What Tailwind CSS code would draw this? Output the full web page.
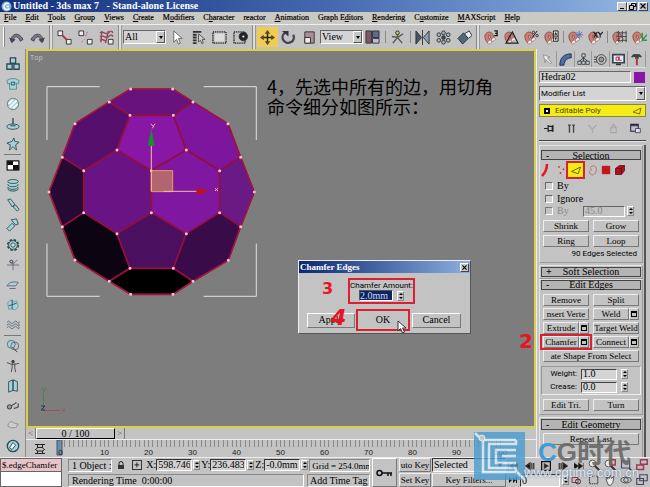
<!DOCTYPE html>
<html lang="en">
<head>
<meta charset="utf-8">
<title>Untitled - 3ds max 7 - Stand-alone License</title>
<script src="https://cdn.jsdelivr.net/npm/@tailwindcss/browser@4"></script>
</head>
<body class="h-screen overflow-hidden bg-[#c3c3c3] font-['Liberation_Serif',serif] text-[10px] leading-3 text-black">
<div class="relative flex h-full flex-col">

  <header class="flex h-3 shrink-0 items-center bg-linear-to-r from-[#14307c] via-[#4468b0] to-[#94b8e4] pl-px pr-[2px] text-[10px] font-bold text-white">
    <svg class="mr-px size-[11px]" viewBox="0 0 11 11"><circle cx="5.500" cy="5.500" r="5" fill="#7fb4d8"/><path d="M8 3C5 1 2.500 4 3 6.500S7 9 8.500 7.500M8 5.500H5.500" stroke="#fff" stroke-width="1.500" fill="none"/></svg>
    <h1 class="whitespace-pre">Untitled - 3ds max 7   - Stand-alone License</h1>
    <div class="ml-auto flex">
      <button aria-label="Minimize" class="flex h-[9px] w-[10px] items-end justify-center border border-t-white border-l-white border-r-[#444] border-b-[#444] bg-[#c8c8c8] pb-px"><span class="h-px w-1 bg-black"></span></button>
      <button aria-label="Restore" class="flex h-[9px] w-[10px] items-center justify-center border border-t-white border-l-white border-r-[#444] border-b-[#444] bg-[#c8c8c8]"><svg class="size-[7px]" viewBox="0 0 7 7" fill="none" stroke="#000"><path d="M2.500 2.500V.5h4v3h-2M.5 2.500h4v4h-4z"/></svg></button>
      <button aria-label="Close" class="ml-px flex h-[9px] w-[10px] items-center justify-center border border-t-white border-l-white border-r-[#444] border-b-[#444] bg-[#c8c8c8]"><svg class="size-[6px]" viewBox="0 0 6 6" stroke="#000" stroke-width="1.200"><path d="M.5.5l5 5M5.500.5l-5 5"/></svg></button>
    </div>
  </header>

  <nav class="flex h-3 shrink-0 items-center gap-[9px] bg-[#cbc9c3] pl-1 text-[8px] whitespace-nowrap [-webkit-text-stroke:0.2px_#000]">
    <button><u>F</u>ile</button><button><u>E</u>dit</button><button><u>T</u>ools</button><button><u>G</u>roup</button><button><u>V</u>iews</button><button><u>C</u>reate</button><button>M<u>o</u>difiers</button><button>C<u>h</u>aracter</button><button>reactor</button><button><u>A</u>nimation</button><button>Graph E<u>d</u>itors</button><button><u>R</u>endering</button><button>C<u>u</u>stomize</button><button><u>M</u>AXScript</button><button><u>H</u>elp</button>
  </nav>

  <div id="toolbar" role="toolbar" aria-label="Main toolbar" class="flex h-[25px] shrink-0 items-center overflow-hidden border-t border-[#eee] bg-[#c3c3c3]"></div>

  <main class="flex min-h-0 flex-1">
    <aside id="side" role="toolbar" aria-label="Reactor tools" class="flex w-[26px] shrink-0 flex-col overflow-hidden border-r border-[#8a8a8a] bg-[#c6c6c6] pt-[5px]"></aside>

    <div class="flex min-w-0 flex-1 flex-col">
      <section class="relative min-h-0 flex-1 overflow-hidden border-2 border-[#d8d04c] bg-[#7d7d7d]">
        <span class="absolute top-[1px] left-[2px] font-['Liberation_Mono',monospace] text-[7px] text-[#c4c4c4]">Top</span>
        <svg class="absolute top-0 left-0 h-[375px] w-[506px]" viewBox="28 51 506 375">
          <g transform="translate(35 75) scale(.3333)">
            <path d="M36 195V35h158M506 35h158v160M36 506v158h158M506 664h158V506" fill="none" stroke="#e2e2e2" stroke-width="3"/>
            <g stroke="#92103c" stroke-width="5" stroke-linejoin="round">
              <path fill="#68127e" d="M223 81L287 42H413L474 81L415 121H285z"/>
              <path fill="#560f6c" d="M223 81L285 121L246 225L146 287L82 247L120 146z"/>
              <path fill="#8817a6" d="M285 121H415L454 225L349 287L246 225z"/>
              <path fill="#7d169c" d="M474 81L579 146L617 247L554 287L454 225L415 121z"/>
              <path fill="#6a1384" d="M246 225L349 287V413L246 476L146 413V287z"/>
              <path fill="#8017a0" d="M454 225L554 287V413L454 476L349 413V287z"/>
              <path fill="#260a33" d="M146 287V413L82 455L42 351L82 247z"/>
              <path fill="#6a1a85" d="M554 287L617 247L658 351L617 455L554 413z"/>
              <path fill="#0d0412" d="M146 413L246 476L285 580L223 619L120 555L82 455z"/>
              <path fill="#4b0f5f" d="M349 413L454 476L415 580H285L246 476z"/>
              <path fill="#390b49" d="M554 413L617 455L580 556L474 619L415 580L454 476z"/>
              <path fill="#000" d="M285 580H415L474 619L414 658H287L223 619z"/>
            </g>
            <path d="M287 42H413L474 81L579 146L617 247L658 351L617 455L580 556L474 619L414 658H287L223 619L120 555L82 455L42 351L82 247L120 146L223 81z" fill="none" stroke="#a8183c" stroke-width="3"/>
            <path d="M287 42h0M413 42h0M474 81h0M579 146h0M617 247h0M658 351h0M617 455h0M580 556h0M474 619h0M414 658h0M287 658h0M223 619h0M120 555h0M82 455h0M42 351h0M82 247h0M120 146h0M223 81h0M285 121h0M415 121h0M246 225h0M454 225h0M349 287h0M146 287h0M554 287h0M146 413h0M349 413h0M554 413h0M246 476h0M454 476h0M285 580h0M415 580h0" stroke="#f4c4dc" stroke-width="9" stroke-linecap="round"/>
            <path d="M349 287h64v63h-64z" fill="#c08060" fill-opacity=".75" stroke="#e8a050" stroke-width="3"/>
            <path d="M349 349V212M386 349h100" stroke="#f0c0a0" stroke-width="3"/>
            <path d="M349 160l10 52h-20z" fill="#14902c"/><path d="M524 349l-40 -11v22z" fill="#c01020"/>
            <path d="M348 146l6 8M360 146l-8 14M540 340l9 8M549 340l-9 8" stroke="#f0b090" stroke-width="3"/>
          </g>
          <path d="M43.500 409V394" stroke="#3f8a4a"/><path d="M43 410.500H60" stroke="#b04858"/>
          <path d="M42 388l2 3M46 388l-3 5" stroke="#3f8a4a"/><path d="M62 409l3 3M65 409l-3 3" stroke="#b04858"/><path d="M41 406h4l-4 4h4" stroke="#303060" fill="none"/>
        </svg>
        <p class="absolute top-[25px] left-[239px] font-['Noto_Sans_CJK_SC',sans-serif] text-[18px] leading-5 whitespace-nowrap text-black">4，先选中所有的边，用切角<br>命令细分如图所示：</p>

        <div role="dialog" aria-label="Chamfer Edges" class="absolute top-[209px] left-[270px] w-[173px] border border-t-[#eee] border-l-[#eee] border-r-[#555] border-b-[#555] bg-[#c3c3c3] pb-[2px]">
          <div class="flex h-3 items-center bg-linear-to-r from-[#0e2870] to-[#8fb0e0] pr-px pl-px text-[9px] font-bold text-white">Chamfer Edges
            <button aria-label="Close dialog" class="ml-auto flex size-[9px] items-center justify-center border border-t-white border-l-white border-r-[#444] border-b-[#444] bg-[#c8c8c8]"><svg class="size-[5px]" viewBox="0 0 6 6" stroke="#000" stroke-width="1.300"><path d="M.5.5l5 5M5.500.5l-5 5"/></svg></button>
          </div>
          <div class="mt-[5px] ml-[49px] flex h-[26px] w-[67px] flex-col items-center border-2 border-[#dc2030] pt-px">
            <label for="amt" class="font-['Roboto',sans-serif] text-[8px] leading-[9px] whitespace-nowrap">Chamfer Amount:</label>
            <div class="flex items-center gap-1"><input id="amt" value="2.0mm" class="h-[11px] w-[34px] border border-[#555] border-r-white border-b-white bg-[#0d2464] text-[10px] text-[#d0d8f0]"><span class="spin"></span></div>
          </div>
          <div class="mt-[5px] flex h-[22px] items-center pl-2">
            <button class="h-[15px] w-[48px] border border-t-white border-l-white border-r-[#777] border-b-[#777]">Apply</button>
            <button class="ml-px h-[22px] w-[54px] border-2 border-[#dc2030]">OK</button>
            <button class="ml-[2px] h-[15px] w-[49px] border border-t-white border-l-white border-r-[#777] border-b-[#777]">Cancel</button>
          </div>
          <span class="absolute top-[18px] left-[23px] font-['DejaVu_Sans',sans-serif] text-[16px] leading-5 font-bold text-[#e81420]">3</span>
          <span class="absolute top-[45px] left-[32px] font-['DejaVu_Sans',sans-serif] text-[22px] leading-6 font-bold text-[#e81420] italic">4</span>
          <svg class="absolute top-[59px] left-[98px] h-[14px] w-[10px]" viewBox="0 0 10 14"><path d="M1 1v10l2.500-2.500L5.500 13l2-1-2-4H9z" fill="#fff" stroke="#333"/></svg>
        </div>
        <span class="absolute right-[1px] bottom-[75px] font-['DejaVu_Sans',sans-serif] text-[20px] leading-5 font-bold text-[#e81420]">2</span>
      </section>

      <div class="flex h-3 shrink-0 items-center border-b border-[#eee] bg-[#c3c3c3] text-[10px]">
        <button aria-label="Previous frame" class="h-[11px] w-[10px] border-r border-[#777] text-[9px] leading-[9px] text-[#555]">&lt;</button>
        <button class="h-[11px] w-[79px] border border-t-white border-l-white border-r-black border-b-black leading-[9px]">0 / 100</button>
        <button aria-label="Next frame" class="h-[11px] w-[10px] border-r border-[#777] text-[9px] leading-[9px] text-[#555]">&gt;</button>
      </div>
      <div class="flex h-[17px] shrink-0 items-center bg-[#c3c3c3]">
        <button aria-label="Open mini curve editor" class="flex w-[28px] shrink-0 justify-end"><svg class="mr-2 size-[12px]" viewBox="0 0 12 12" fill="none" stroke="#222"><path d="M1 1.500h10M1 10.500h10M3.500 2v3L1.500 6.500 3.500 8v2.500M8.500 2v3l2 1.500L8.500 8v2.500M3 4.500h6M3 8h6"/></svg></button>
        <svg id="ticks" class="h-[17px] w-[480px] shrink-0" viewBox="54 440 480 17" font-family="Liberation Sans, sans-serif" font-size="8"></svg>
      </div>
    </div>

    <aside class="flex w-[114px] shrink-0 flex-col overflow-hidden border-l border-[#eee] bg-[#c3c3c3] pt-[2px] pr-[4px] pl-[2px]">
      <div id="tabs" class="flex h-[17px] shrink-0 items-center border-b border-[#ddd]"></div>
      <div class="mt-[3px] flex shrink-0 items-center justify-between pr-px">
        <input aria-label="Object name" value="Hedra02" class="h-3 w-[92px] border border-[#666] border-r-white border-b-white bg-[#cfcfcf] px-px">
        <button aria-label="Object colour" class="size-[11px] bg-[#8a14a8]"></button>
      </div>
      <div class="relative mt-[3px] shrink-0">
        <select aria-label="Modifier List" class="block h-[15px] w-full appearance-none border border-[#666] border-r-white border-b-white bg-[#d4d4d4] px-px font-['Roboto',sans-serif] text-[8px]"><option>Modifier List</option></select>
        <span class="pointer-events-none absolute top-px right-px flex h-[13px] w-[9px] items-center justify-center border border-t-white border-l-white border-r-[#555] border-b-[#555] bg-[#c6c6c6]"><span class="border-x-2 border-t-3 border-x-transparent border-t-black"></span></span>
      </div>
      <div class="mt-[3px] flex h-[13px] shrink-0 items-center border border-[#8a8640] bg-[#f4ec14] pr-[3px] pl-1 font-['Roboto',sans-serif] text-[8px] text-[#4a4410]">
        <span class="mr-[5px] flex size-[6px] items-center justify-center bg-black"><span class="size-[2px] bg-white"></span></span>Editable Poly
        <svg class="ml-auto h-[8px] w-[10px]" viewBox="0 0 10 8" fill="none" stroke="#7a7210"><path d="M1 5L9 1 7.500 7z"/></svg>
      </div>
      <div id="stack" class="mt-[2px] flex h-[18px] shrink-0 items-center"></div>
      <div class="mt-[3px] h-[2px] shrink-0 border-t border-[#444] bg-[#e0e0e0]"></div>

      <div class="mt-[3px] min-h-0 flex-1 overflow-hidden border-r-2 border-[#555] pr-px">
        <section class="border border-[#999] border-t-[#e4e4e4] border-l-[#e4e4e4] px-px pt-[4px] pb-[2px]">
          <h2 class="relative h-[10px] border border-[#444] bg-[#b4b4b4] text-center leading-[9px]"><span class="absolute left-1">-</span>Selection</h2>
          <div id="subobj" class="relative flex h-[20px] items-center pl-[14px]"></div>
          <div class="flex flex-col px-1">
            <label class="flex h-3 items-center gap-1"><input type="checkbox" class="size-[8px] appearance-none border border-[#666] border-r-white border-b-white bg-[#d0d0d0]">By</label>
            <label class="flex h-[13px] items-center gap-1"><input type="checkbox" class="size-[8px] appearance-none border border-[#666] border-r-white border-b-white bg-[#d0d0d0]">Ignore</label>
            <div class="flex h-3 items-center text-[#888]"><label class="flex items-center gap-1"><input type="checkbox" disabled class="size-[8px] appearance-none border border-[#777] border-r-white border-b-white">By</label><input aria-label="Angle" disabled value="45.0" class="ml-auto h-[11px] w-[42px] border border-[#666] border-r-white border-b-white px-px"><span class="spin mr-[3px] ml-[2px]"></span></div>
          </div>
          <div class="mt-[3px] grid grid-cols-2 gap-x-1 gap-y-[3px] px-[2px]">
            <button class="btn">Shrink</button><button class="btn">Grow</button><button class="btn">Ring</button><button class="btn">Loop</button>
          </div>
          <p class="mt-px pr-1 text-right font-['Roboto',sans-serif] text-[8px]">90 Edges Selected</p>
        </section>
        <section class="mt-[2px] border border-[#999] border-t-[#e4e4e4] border-l-[#e4e4e4] p-px">
          <h2 class="relative h-[10px] border border-[#444] bg-[#b4b4b4] text-center leading-[8px]"><span class="absolute left-1 font-bold">+</span>Soft Selection</h2>
        </section>
        <section class="border border-[#999] border-t-[#e4e4e4] border-l-[#e4e4e4] px-px pb-[3px]">
          <h2 class="relative h-[10px] border border-[#444] bg-[#b4b4b4] text-center leading-[8px]"><span class="absolute left-1">-</span>Edit Edges</h2>
          <div class="mt-[4px] grid grid-cols-2 gap-x-1 gap-y-[2px] px-[2px]">
            <button class="btn">Remove</button><button class="btn">Split</button>
            <button class="btn">nsert Verte</button><div class="flex"><button class="btn flex-1">Weld</button><button class="opt" aria-label="Weld settings"></button></div>
            <div class="flex"><button class="btn flex-1">Extrude</button><button class="opt" aria-label="Extrude settings"></button></div><button class="btn">Target Weld</button>
            <div class="relative flex"><button class="btn flex-1">Chamfer</button><button class="opt" aria-label="Chamfer settings"></button><span class="pointer-events-none absolute -inset-x-[3px] -inset-y-[2px] border-2 border-[#dc2030]"></span></div><div class="flex"><button class="btn flex-1">Connect</button><button class="opt" aria-label="Connect settings"></button></div>
            <button class="btn col-span-2">ate Shape From Select</button>
          </div>
          <div class="mt-[4px] flex flex-col gap-px border border-[#999] border-r-[#eee] border-b-[#eee] py-px pr-3 font-['Roboto',sans-serif] text-[8px]">
            <div class="flex h-3 items-center justify-end gap-1"><label for="wt">Weight:</label><input id="wt" value="1.0" class="h-[11px] w-[36px] border border-[#444] border-r-white border-b-white bg-[#d4d4d4] px-px font-['Liberation_Serif',serif] text-[10px]"><span class="spin"></span></div>
            <div class="flex h-3 items-center justify-end gap-1"><label for="cr">Crease:</label><input id="cr" value="0.0" class="h-[11px] w-[36px] border border-[#444] border-r-white border-b-white bg-[#d4d4d4] px-px font-['Liberation_Serif',serif] text-[10px]"><span class="spin"></span></div>
          </div>
          <div class="mt-[4px] grid grid-cols-2 gap-1 px-[2px]"><button class="btn">Edit Tri.</button><button class="btn">Turn</button></div>
        </section>
        <section class="mt-[2px] h-16 border border-[#999] border-t-[#e4e4e4] border-l-[#e4e4e4] px-px pt-px">
          <h2 class="relative h-[11px] border border-[#444] bg-[#b4b4b4] text-center leading-[9px]"><span class="absolute left-1">-</span>Edit Geometry</h2>
          <div class="mt-[3px] grid px-[2px]"><button class="btn">Repeat Last</button></div>
        </section>
      </div>
    </aside>
  </main>

  <footer class="flex h-[30px] shrink-0 gap-[2px] border-t border-[#eee] bg-[#c3c3c3] whitespace-nowrap">
    <div class="flex w-[62px] shrink-0 flex-col">
      <input aria-label="Macro recorder" value="$.edgeChamfer" class="h-[14px] w-full border border-[#666] bg-[#e8c4c8] px-px text-[9px]">
      <input aria-label="Script listener" class="h-[15px] w-full border border-t-0 border-[#666] bg-white">
    </div>
    <div class="ml-1 flex w-[302px] shrink-0 flex-col gap-px">
      <div class="flex h-[14px] items-center">
        <span class="h-[13px] w-[46px] overflow-hidden border border-[#888] border-r-white border-b-white pl-[3px]">1 Object :</span>
        <button aria-label="Lock selection" class="ml-[5px]"><svg class="size-[8px]" viewBox="0 0 8 8"><path d="M2 4V2.500a2 2 0 014 0V4" fill="none" stroke="#222"/><path d="M1 4h6v4H1z" fill="#333"/></svg></button>
        <button aria-label="Absolute mode" class="mr-[4px] ml-[7px] size-[10px] border border-[#333]"><svg viewBox="0 0 8 8" stroke="#222"><path d="M4 1.500v5M1.500 4h5"/></svg></button>
        <label for="cx">X:</label><input id="cx" value="598.746mm" class="h-3 w-[36px] border border-[#333] border-r-white border-b-white bg-[#d0d0d0] px-px text-[10px]"><span class="spin mr-px ml-px"></span>
        <label for="cy">Y:</label><input id="cy" value="236.483mm" class="h-3 w-[36px] border border-[#333] border-r-white border-b-white bg-[#d0d0d0] px-px text-[10px]"><span class="spin mr-px ml-px"></span>
        <label for="cz">Z:</label><input id="cz" value="-0.0mm" class="h-3 w-[36px] border border-[#333] border-r-white border-b-white bg-[#d0d0d0] px-px text-[10px]"><span class="spin mr-px ml-px"></span>
        <span class="ml-auto h-[13px] w-[63px] overflow-hidden border border-[#888] border-r-white border-b-white pl-[2px] text-[9px]">Grid = 254.0mm</span>
      </div>
      <div class="flex h-[14px] items-center justify-between">
        <span class="h-[13px] w-[236px] border border-[#888] border-r-white border-b-white pl-[3px]">Rendering Time&nbsp; 0:00:00</span>
        <span class="h-[13px] w-[63px] border border-[#888] border-r-white border-b-white pl-[2px]">Add Time Tag</span>
      </div>
    </div>
    <button aria-label="Set keys" class="flex w-[25px] shrink-0 items-center justify-center border border-t-white border-l-white border-r-[#777] border-b-[#777]"><svg class="h-[8px] w-[17px]" viewBox="0 0 17 8" fill="none" stroke="#111" stroke-width="1.500"><circle cx="3.500" cy="4" r="2.500"/><path d="M6 4h10M12 4v3M15 4v3"/></svg></button>
    <div class="grid w-[107px] shrink-0 grid-cols-[32px_74px] grid-rows-2 gap-px">
      <button class="btn2">uto Key</button>
      <div class="relative"><select aria-label="Key mode" class="h-[14px] w-full appearance-none border border-[#333] border-r-white border-b-white bg-[#d4d4d4] px-px text-[10px]"><option>Selected</option></select><span class="pointer-events-none absolute top-[5px] right-[3px] border-x-3 border-t-4 border-x-transparent border-t-black"></span></div>
      <button class="btn2">Set Key</button><button class="btn2">Key Filters...</button>
    </div>
    <div class="flex w-[76px] shrink-0 flex-col">
      <div id="play" class="flex h-[15px] items-center justify-between"></div>
      <div class="flex h-[14px] items-center gap-[2px]"><button aria-label="Key mode toggle"><svg class="size-[10px]" viewBox="0 0 10 10" fill="#111"><path d="M1 2v6l3-3zM5 2v6l3-3zM8 2h1v6H8z"/></svg></button><input aria-label="Current frame" value="0" class="h-[13px] w-[40px] border border-[#333] border-r-white border-b-white bg-[#d8d8d8] px-px text-[10px]"><span class="spin"></span><button aria-label="Time configuration"><svg class="size-[10px]" viewBox="0 0 10 10" fill="none"><path d="M1 2.500h6v5H1z" stroke="#a03040"/><circle cx="7" cy="6.500" r="2.500" stroke="#333"/></svg></button></div>
    </div>
    <div id="nav" class="grid flex-1 grid-cols-4 place-items-center"></div>
  </footer>

  <div class="pointer-events-none absolute right-[8px] bottom-[3px] h-[53px] w-[168px]">
    <svg class="absolute top-[1px] left-0 h-[49px] w-[51px] opacity-80" viewBox="0 0 51 49">
      <path d="M0 0h51v48H0z" fill="#58a8d8"/>
      <path d="M0 0h51v48H0z" fill="#2f86c4" fill-opacity=".35"/>
      <path d="M1 1l8 8M42 8H9v32h33M42 8v4H15v24h27v4M42 18H22v13h20M51 48l-8-8M28 24h14" stroke="#dcecf6" stroke-width="2.500" fill="none"/>
      <circle cx="8" cy="6" r="3" fill="#b8ccd0" stroke="#eee"/>
    </svg>
    <div class="absolute top-[7px] left-[64px] flex font-['Liberation_Sans','Noto_Sans_CJK_SC',sans-serif] text-[26px] leading-7 font-bold whitespace-nowrap text-[#666]/90"><span class="text-[#3c9bd8]">C</span>G<span class="font-['Noto_Sans_CJK_SC',sans-serif] text-[27px]">时代</span></div>
    <div class="absolute top-[36px] left-[50px] font-['Liberation_Sans',sans-serif] text-[13px] leading-3 whitespace-nowrap text-[#eef2f6]/90 [text-shadow:0_0_2px_#4a6a8a]">www.cgtime.com.cn</div>
  </div>
</div>

<script>
const svg = (body, cls = 'block h-4 w-4') => `<svg class="${cls}" viewBox="0 0 16 16" fill="none" stroke="#333">${body}</svg>`;
const magnet = '<path d="M1 8C0 3 6 0 9 4l3 6-3 2-3-6C5 5 4 6 5 8l3 5-3 2C3 13 1 10 1 8z" fill="#d07c70" stroke="#6a3a38" stroke-width=".7"/><path d="M9 12l3-2-1-2-3 2zM5 15l3-2-1-2-3 2z" fill="#eee" stroke="none"/>';
const box = (x, y) => `<path d="M${x} ${y}h5v5h-5z" fill="#eee"/>`;
const tools = [
  ['grip'],
  ['Undo', '<path d="M2 12C2 4 10 1 15 10l-3 2C10 6 6 6 5 10z" fill="#778" stroke="#445"/><path d="M0 8l3 6 4-4z" fill="#445" stroke="none"/>'],
  ['Redo', '<path d="M14 12C14 4 6 1 1 10l3 2C6 6 10 6 11 10z" fill="#778" stroke="#445"/><path d="M16 8l-3 6-4-4z" fill="#445" stroke="none"/>'],
  ['dsep'],
  ['Link', box(1, 1) + box(10, 10) + '<path d="M6 6l5 5" stroke="#a33" stroke-width="2"/>'],
  ['Unlink', box(1, 1) + box(10, 10) + '<path d="M10 2l-2 5M4 13l3-3" stroke="#b66" stroke-dasharray="2 1"/>'],
  ['Bind', '<path d="M1 3c4-3 5 3 9 0s4-1 5 0M1 7c4-3 5 3 9 0s4-1 5 0M1 11c4-3 4 2 7 0M3 1l-1 12M10 1L7 14" stroke="#944a58" stroke-width="1.500"/>' + box(10, 10)],
  ['dsep'],
  ['select', 'All', 'Selection filter'],
  ['Select', '<path d="M4 1v12l3-3 2 5 2-1-2-5h4z" fill="#fff" stroke="#666"/>'],
  ['Select by name', '<path d="M2 2h9M2 5h4M2 8h4M2 11h4M2 14h4" stroke-width="2"/><path d="M8 4v9l2-2 2 4 1-1-1-4h3z" fill="#ccc" stroke="#555"/>'],
  ['Selection region', '<path d="M1 2h14v12H1z" stroke-width="2" stroke-dasharray="1 1"/><path d="M3 4h10v8H3z" fill="#ddd" stroke="none"/>'],
  ['Window crossing', '<path d="M1 2h12v12H1z" stroke-width="2" stroke-dasharray="1 1"/><circle cx="11" cy="7" r="4.500" fill="#222"/><circle cx="11" cy="7" r="1.500" fill="#eee"/>'],
  ['dsep'],
  ['Move', '<path d="M8 2v12M2 8h12" stroke="#222" stroke-width="1.500"/><path d="M8 0l3 4H5zM8 16l3-4H5zM0 8l4-3v6zM16 8l-4-3v6z" fill="#554a20" stroke="none"/>', 1],
  ['Rotate', '<path d="M4 3A6 6 0 1013 5" stroke="#445" stroke-width="2.500"/><path d="M1 1h7v6z" fill="#334" stroke="none"/>'],
  ['Scale', '<path d="M3 2h10v12H3z" fill="#a89098"/><path d="M3 8h6v6H3z" fill="#f4e8ec"/>'],
  ['select', 'View', 'Reference coordinate system'],
  ['Pivot', '<path d="M1 1h6v13H1z" fill="#7a5868"/><path d="M8 1h7v7H8z" fill="#5c6a90"/><path d="M8 9h7v5H8z" fill="#b8c0d0"/>'],
  ['sep'],
  ['Manipulate', '<path d="M8 1v8M3 14l5-6 5 6M2 7l6 1 6-4" stroke="#565a50" stroke-width="1.500"/><circle cx="8" cy="3" r="2" fill="#c8c060"/>'],
  ['sep'],
  ['Mirror', '<path d="M1 1l6 7-6 7z" fill="#456"/><path d="M15 1L9 8l6 7z" fill="#8aa0b8"/><path d="M8 0v16"/>'],
  ['Array', '<g fill="#9fb4c4"><circle cx="8" cy="3" r="2"/><circle cx="3" cy="5" r="2"/><circle cx="13" cy="5" r="2"/><circle cx="3" cy="11" r="2"/><circle cx="13" cy="11" r="2"/><circle cx="8" cy="13" r="2"/><circle cx="8" cy="8" r="2" fill="#445"/></g>'],
  ['Align', '<path d="M1 9l6-6 5 6-6 6z" fill="#4a6c7a"/><path d="M8 4l5-3 3 5-4 3z" fill="#e4ecf0"/>'],
  ['dsep'],
  ['Snap', magnet + '<path d="M11 1h3v5h-3M12 3.500h2" stroke="#111" stroke-width="1.300"/>', 2],
  ['Angle snap', magnet + '<path d="M2 14h13L9 2z" stroke="#222" stroke-width="1.200"/>', 2],
  ['Percent snap', magnet + '<path d="M14 1L9 8" stroke="#111"/><circle cx="10" cy="2.500" r="1.300"/><circle cx="14" cy="6" r="1.300"/>', 2],
  ['Spinner snap', magnet + '<path d="M10 1h5v11h-5zM10 6.500h5" stroke="#222" fill="#ddd"/><path d="M11 5l1.500-3L14 5zM11 8l1.500 3L14 8z" fill="#222" stroke="none"/>', 2],
  ['sep'],
  ['Snap vertex', magnet + '<path d="M12 1v8M8 5h8M9 2l6 6M15 2L9 8" stroke="#5a70c0"/>', 2],
  ['Snap axis', magnet + '<path d="M6 2l4 6M10 2L6 8M11 2l2 3 3-3M13 5v3" stroke="#222" stroke-width="1.300"/>', 2],
  ['sep'],
  ['Snap grid', magnet + '<path d="M7 1v12M11 1v12M15 1v12M5 3h11M5 7h11M5 11h11" stroke="#444"/>', 2],
  ['Snap pivot', magnet + '<path d="M11 12V3M11 11h5M11 11l5-6" stroke="#2c9a48" stroke-width="1.600"/>', 2],
];
document.getElementById('toolbar').innerHTML = tools.map(([n, b, k]) => {
  if (n === 'grip') return '<i class="flex h-5 w-[6px] shrink-0 justify-end pr-px"><i class="w-[2px] border-x border-l-white border-r-[#888]"></i></i>';
  if (n === 'dsep') return '<i class="flex h-full w-[6px] shrink-0 justify-between px-px"><i class="w-[2px] border-x border-l-[#888] border-r-[#ddd]"></i><i class="w-[2px] border-x border-l-[#ddd] border-r-[#999]"></i></i>';
  if (n === 'sep') return '<i class="flex h-3 w-1 shrink-0 justify-center"><i class="w-px bg-[#888]"></i></i>';
  if (n === 'select') return `<div class="relative w-[43px] shrink-0 ${b === 'All' ? 'mr-px' : '-mr-px'}"><select aria-label="${k}" class="block h-[14px] w-full appearance-none border border-[#666] border-r-white border-b-white bg-[#d4d4d4] px-px text-[10px] leading-3"><option>${b}</option></select><span class="pointer-events-none absolute top-px right-px flex h-3 w-[9px] items-center justify-center border border-t-white border-l-white border-r-[#555] border-b-[#555] bg-[#c6c6c6]"><span class="border-x-2 border-t-3 border-x-transparent border-t-black"></span></span></div>`;
  const cls = k === 1 ? 'flex h-5 w-[21px] shrink-0 items-center justify-center bg-[#f0cc50]' : k === 2 ? 'flex h-5 w-5 shrink-0 items-center justify-center' : 'flex h-5 w-[21px] shrink-0 items-center justify-center';
  return `<button aria-label="${n}" class="${cls}">${svg(b, 'block h-[15px] w-[15px]')}</button>`;
}).join('');

const T = '#a4d4d8', D = '#2c4a50';
const side = [
  ['Rigid bodies', `<path d="M5 1h6v6H5zM1 8h6v6H1zM9 8h6v6H9z" fill="${T}" stroke="${D}" stroke-width="1.500"/>`],
  ['Cloth', `<path d="M1 4l4-2h6l4 2-1 4-2-1v7H4V7L2 8z" fill="${T}" stroke="#5a8a90"/><path d="M6 6h4v3H6z" stroke="${D}"/>`],
  ['Soft body', `<circle cx="8" cy="8" r="6.500" fill="${T}" stroke="#777"/><path d="M4 12L12 4M3 8l5-5M8 13l5-5" stroke="#fff" stroke-width="2"/>`],
  ['Rope', `<path d="M8 1v9" stroke="${D}" stroke-width="1.500"/><ellipse cx="8" cy="11" rx="7" ry="3" fill="${T}" stroke="${D}"/><path d="M5 10h6"/>`],
  ['Deforming mesh', `<path d="M9 1l1 4 5 1-4 3 1 6-4-4-4 4 1-6-4-2 6-2z" fill="${T}" stroke="${D}"/>`],
  null,
  ['Plane', '<path d="M1 3h14v11H1z" fill="#111"/><path d="M8 4h6v4H8zM2 8h6v5H2z" fill="#fff" stroke="none"/>'],
  ['Spring', `<path d="M2 4c0-3 12-3 12 0s-12 3-12 0M2 7c0 4 12 4 12 0M2 10c0 4 12 4 12 0M2 12c0 4 12 4 12 0" fill="${T}" stroke="${D}"/>`],
  ['Linear dashpot', `<path d="M2 2l3-1 5 6-3 3zM8 10l3-2 4 5-2 2z" fill="${T}" stroke="${D}"/>`],
  ['Angular dashpot', `<path d="M6 2l6-1 2 6-3 1zM1 12l6-6 3 3-6 6z" fill="${T}" stroke="${D}"/>`],
  ['Motor', `<circle cx="8" cy="8" r="6" stroke="${D}" stroke-width="2" stroke-dasharray="3 1.700"/><circle cx="8" cy="8" r="5" fill="${T}" stroke="${D}"/><circle cx="8" cy="8" r="2.500" fill="#ddd" stroke="${D}"/>`],
  ['Wind', `<path d="M1 8h14M8 3v11M4 4l4 3 5-5" stroke="#667"/><circle cx="6" cy="4" r="1.500" fill="${T}"/>`],
  ['Toy car', `<path d="M1 9c3-5 8-5 13-4l-3 4zM4 12h7" fill="${T}" stroke="#567"/>`],
  ['Fracture', `<path d="M2 5l4-3 2 3 4-2 2 7-4 4-3-2-4 1z" fill="${T}" stroke="#6a9aa0"/><path d="M7 2v11M3 9l9-3" stroke="${D}"/>`],
  ['Water', '<path d="M1 5q2-3 4 0t4 0 4 0 2-1M1 8q2-3 4 0t4 0 4 0 2-1M1 11q2-3 4 0t4 0 4 0 2-1" stroke="#567"/>'],
  null,
  ['Constraint solver', `<circle cx="6" cy="6" r="4.500" fill="${T}" stroke="#567"/><circle cx="10" cy="8" r="4.500" stroke="#567"/><path d="M8 10l5 5"/>`],
  ['Rag doll', `<circle cx="8" cy="3" r="1.500" fill="#555"/><path d="M1 4l5 2h4l5-1M7 5v5l-1 5M10 5v5l1 5" stroke="#444"/>`],
  ['Hinge', `<path d="M3 3l5-2v12l-5 2zM8 1l5 2v11l-5-1z" fill="${T}" stroke="${D}"/>`],
  ['Wheel', '<circle cx="4" cy="9" r="2.500" fill="#999"/><path d="M6 8l6-4M9 11l5-2v-4" stroke="#555" stroke-width="1.500"/>'],
  ['Path', `<path d="M2 8c2-6 4-6 8-3l4 1-3 4H5z" fill="#ccc" stroke="#888"/>`],
  ['Preview', `<circle cx="8" cy="8" r="6.500" fill="${T}" stroke="${D}" stroke-width="1.500"/><path d="M4 10l4-6 3 3-4 5z" fill="#e8f4f4" stroke="${D}"/>`],
];
document.getElementById('side').innerHTML = side.map(s => s
  ? `<button aria-label="${s[0]}" class="flex h-5 shrink-0 items-center justify-center">${svg(s[1], 'block h-[14px] w-[14px]')}</button>`
  : '<hr class="mx-1 border-[#777]">').join('');

const fill = (id, list, btn, size) => document.getElementById(id).innerHTML = list.map(([n, b]) => `<button aria-label="${n}" class="${btn}">${svg(b, size)}</button>`).join('');
fill('tabs', [
  ['Create', '<path d="M3 2l8 3-3 1 5 6-2 1-5-5-1 4z" fill="#eee" stroke="#888"/>'],
  ['Modify', '<path d="M1 15C1 6 6 1 15 1v5c-5 0-8 3-9 9z" fill="#4a6ea8" stroke="#223"/>'],
  ['Hierarchy', '<path d="M6 1h4v4H6zM1 10h4v4H1zM6 10h4v4H6zM11 10h4v4h-4z" fill="#c8d4e0"/><path d="M8 5v5M3 10l5-4 5 4"/>'],
  ['Motion', '<circle cx="9" cy="8" r="6"/><circle cx="9" cy="8" r="3" fill="#99a"/><path d="M0 5h4M0 8h3M0 11h4"/>'],
  ['Display', '<path d="M1 2h14v10H1z" fill="#e8e8f0" stroke="#345" stroke-width="2"/><path d="M5 5h3v4H5zM9 4v5h3" stroke="#a24"/><path d="M5 14h6" stroke-width="2"/>'],
  ['Utilities', '<path d="M2 5l2-3h8l2 3-4-1v3H7V4z" fill="#444"/><path d="M8.500 6v9" stroke="#a44048" stroke-width="2.500"/>'],
], 'flex h-4 flex-1 items-center justify-center border-r border-[#999]', 'block size-[13px]');
fill('stack', [
  ['Pin stack', '<path d="M0 8h6M6 3v10M6 5h6v6H6M13 3v10" stroke="#222" stroke-width="1.700"/>'],
  ['Show end result', '<path d="M5 2v12M11 2v12M3 3h4M9 3h4" stroke="#444" stroke-width="2"/>'],
  ['Make unique', '<path d="M2 3l6 6 6-6M8 9v5" stroke="#aaa" stroke-width="2"/>'],
  ['Remove modifier', '<path d="M4 7h8v7H4zM5 6l3-4 3 4" stroke="#a4a4a4" stroke-width="1.500"/>'],
  ['Configure sets', '<path d="M1 2h11v10H1zM1 4h11" stroke="#224" stroke-width="1.500"/><path d="M8 8h7v6H8z" fill="#dde" stroke="#224"/>'],
], 'flex flex-1 items-center justify-center', 'block size-[11px]');
fill('subobj', [
  ['Vertex', '<path d="M3 4h2M9 7h2M5 12h2" stroke="#c22" stroke-width="2"/>'],
  ['Edge', '<path d="M2 10L14 4 11 13z" stroke="#6a6410" stroke-width="1.300"/>'],
  ['Border', '<path d="M8 3c5-3 7 4 5 8s-6 5-8 1 4-3 2-5-1-3 1-4z" stroke="#c66" stroke-width="1.300"/>'],
  ['Polygon', '<path d="M3 3h10v10H3z" fill="#d01018" stroke="#a01010"/>'],
  ['Element', '<path d="M2 6l5-4h7v7l-4 5H2z" fill="#b01020" stroke="#600810"/><path d="M2 6h8v8M10 6l4-4" stroke="#600810"/>'],
], 'flex h-[18px] w-[14px] items-center justify-center nth-2:-ml-[3px] nth-2:w-[19px] nth-2:border-2 nth-2:border-[#dc2030] nth-2:bg-[#f4ec14]', 'block size-[12px]');
document.getElementById('subobj').insertAdjacentHTML('beforeend', '<svg class="absolute top-[3px] left-0 h-[15px] w-[8px]" viewBox="0 0 8 15" fill="none" stroke="#e81420" stroke-width="2.500"><path d="M6 1C6 6 4 10 1 13"/></svg>');
fill('play', [
  ['Go to start', '<path d="M1 3v10M9 3v10L2 8zM16 3v10L9 8z" fill="#111"/>'],
  ['Previous', '<path d="M8 3v10L1 8zM11 3v10M14 3v10" fill="#111" stroke-width="2"/>'],
  ['Play', '<path d="M1 1h14v14H1z" stroke="#111" stroke-width="2"/><path d="M5 4v8l7-4z" fill="#223"/>'],
  ['Next', '<path d="M8 3v10l7-5zM2 3v10M5 3v10" fill="#111" stroke-width="2"/>'],
  ['Go to end', '<path d="M15 3v10M7 3v10l7-5zM0 3v10l7-5z" fill="#111"/>'],
], 'flex items-center justify-center', 'block size-[10px]');
const lens = '<circle cx="6" cy="6" r="4.500" fill="#e8eef4"/><path d="M9 9l6 6" stroke-width="2.500"/>';
fill('nav', [
  ['Zoom', lens], ['Zoom all', lens + '<path d="M8 1h7v7H8z" stroke="#b03848" stroke-width="2"/>'],
  ['Zoom extents', '<path d="M2 1v11h10M4 3h9v9" stroke="#447" stroke-width="1.500"/><path d="M12 12l3 3" stroke-width="2"/>'],
  ['Zoom extents all', '<path d="M6 1h9v6H6zM1 8h9v6H1z" stroke="#a03858" stroke-width="2"/>'],
  ['Region', '<path d="M2 3h11v10H2z" stroke-dasharray="2 1" stroke-width="1.500"/>'],
  ['Pan', '<path d="M3 8V4l2 3V2l2 4 1-5 2 5 3-3-1 8-3 4H6z" fill="#eee"/>'],
  ['Arc rotate', '<ellipse cx="8" cy="8" rx="7" ry="4"/><circle cx="8" cy="8" r="3" fill="#bcc"/>'],
  ['Maximize viewport', '<path d="M5 1h10v8H5zM1 6h9v8H1z" stroke="#446" stroke-width="1.500"/>'],
], 'flex items-center justify-center', 'block size-[12px]');

document.querySelectorAll('.spin').forEach(e => {
  e.className += ' flex h-[10px] w-[7px] shrink-0 flex-col items-center justify-between border border-t-white border-l-white border-r-[#888] border-b-[#888] py-px';
  e.innerHTML = '<i class="border-x-2 border-b-2 border-x-transparent border-b-black"></i><i class="border-x-2 border-t-2 border-x-transparent border-t-black"></i>';
});
document.querySelectorAll('.btn').forEach(e => e.className += ' flex h-3 min-w-0 items-center justify-center overflow-hidden border border-t-[#eee] border-l-[#eee] border-r-[#777] border-b-[#777] text-[9px] leading-[10px] whitespace-nowrap');
document.querySelectorAll('.btn2').forEach(e => e.className += ' flex h-[14px] min-w-0 items-center justify-center overflow-hidden border border-t-[#eee] border-l-[#eee] border-r-[#777] border-b-[#777] text-[9px]');
document.querySelectorAll('.opt').forEach(e => {
  e.className += ' flex h-3 w-[10px] shrink-0 items-center justify-center border border-t-[#eee] border-l-[#eee] border-r-[#777] border-b-[#777]';
  e.innerHTML = '<i class="size-[6px] border border-t-2 border-black"></i>';
});

let t = '<path d="M57 440h5v15h-5z" fill="#6c8ca8" stroke="#456"/>';
for (let i = 0; i <= 100; i++) {
  const x = Math.round(60 + i * 4.4) + .5;
  t += `<path d="M${x} 440v7" stroke="#8a8a8a"/>`;
  if (i % 10 === 0) t += `<text x="${x}" y="455" text-anchor="middle" fill="#222">${i}</text>`;
}
document.getElementById('ticks').innerHTML = t;
</script>
</body>
</html>
